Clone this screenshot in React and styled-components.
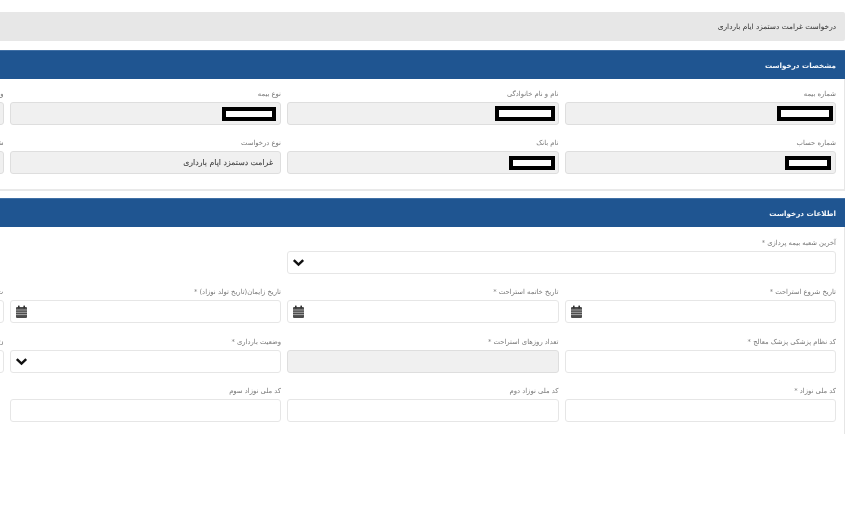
import React from "react";
import styled, { createGlobalStyle } from "styled-components";

const Global = createGlobalStyle`
  html, body { margin: 0; padding: 0; background: #fff; overflow: hidden; }
  body { font-family: "DejaVu Sans", "Noto Sans", sans-serif; }
`;

const Page = styled.div`
  width: 853px;
  height: 514px;
  overflow: hidden;
  display: flex;
  justify-content: flex-end;
  padding: 12px 8px 0 0;
  box-sizing: border-box;
  filter: blur(0.4px);
`;

const Column = styled.div`
  flex: none;
  width: 1134px;
  direction: rtl;
  display: flex;
  flex-direction: column;
`;

const TitleBar = styled.div`
  height: 29px;
  background: #e7e7e7;
  border-radius: 2px;
  display: flex;
  align-items: center;
  padding-right: 9px;
  font-size: 7.4px;
  color: #333;
  margin-bottom: 9px;
`;

const Panel = styled.section`
  border: solid #e6e6e6;
  border-width: 0 1px;
  border-bottom: ${(p) => (p.$open ? "0" : "2px solid #e9e9e9")};
  margin-bottom: 7px;
  height: ${(p) => p.$height}px;
  box-sizing: border-box;
`;

const PanelHeader = styled.h2`
  margin: 0 -1px;
  height: 29px;
  background: #1f5591;
  border-top: 1px solid #3f6fa5;
  box-sizing: border-box;
  display: flex;
  align-items: center;
  padding-right: 9px;
  font-size: 7.2px;
  font-weight: 700;
  color: #f4f7fb;
`;

const Grid = styled.div`
  display: grid;
  grid-template-columns: repeat(4, 271.5px);
  column-gap: 6px;
  row-gap: 10.33px;
  padding: ${(p) => p.$top}px 8px 0 0;
`;

const Field = styled.div`
  grid-column: span ${(p) => p.$span || 1};
  display: flex;
  flex-direction: column;
  min-width: 0;
`;

const Label = styled.label`
  height: 16px;
  line-height: 16px;
  font-size: 6.8px;
  color: #777;
  white-space: nowrap;
`;

const Control = styled.div`
  height: 23px;
  box-sizing: border-box;
  border: 1px solid ${(p) => (p.$disabled ? "#dedede" : "#e6e6e6")};
  border-radius: 3px;
  background: ${(p) => (p.$disabled ? "#f0f0f0" : "#fff")};
  display: flex;
  align-items: center;
  justify-content: ${(p) => (p.$icon ? "flex-end" : "flex-start")};
  padding: 0 ${(p) => p.$pad ?? 4}px 0 4px;
  font-size: 7.8px;
  color: #444;
  -webkit-text-stroke: 0.1px #444;
  white-space: nowrap;
`;

const Redacted = styled.span`
  display: block;
  box-sizing: border-box;
  width: ${(p) => p.$w}px;
  height: ${(p) => p.$h}px;
  background: #fff;
  border: 4px solid #000;
`;

const IconSvg = styled.svg`
  display: block;
  flex: none;
  width: 13px;
  height: 13px;
`;

function CalendarIcon() {
  return (
    <IconSvg viewBox="0 0 13 13">
      <rect x="1" y="2" width="11" height="11" rx="1" fill="#4c4c4c" />
      <rect x="3" y="0.5" width="1.6" height="3" rx="0.5" fill="#333" />
      <rect x="8.4" y="0.5" width="1.6" height="3" rx="0.5" fill="#333" />
      <path d="M1 5h11M1 7.3h11M1 9.6h11" stroke="#bdbdbd" strokeWidth="0.8" />
    </IconSvg>
  );
}

function ChevronIcon() {
  return (
    <IconSvg viewBox="0 0 13 13">
      <path d="M1.8 4.2 6.5 8.6 11.2 4.2" fill="none" stroke="#111" strokeWidth="2.5" />
    </IconSvg>
  );
}

const Star = " *";

const first = [
  ["شماره بیمه", 56, 15, 2],
  ["نام و نام خانوادگی", 60, 15, 3],
  ["نوع بیمه", 54, 14, 4],
  ["و", 0, 0, 4],
  ["شماره حساب", 46, 14, 4],
  ["نام بانک", 46, 14, 3],
  ["نوع درخواست", 0, 0, 7, "غرامت دستمزد ایام بارداری"],
  ["ش", 0, 0, 4],
];

const second = [
  { label: "تاریخ شروع استراحت" + Star, kind: "date" },
  { label: "تاریخ خاتمه استراحت" + Star, kind: "date" },
  { label: "تاریخ زایمان(تاریخ تولد نوزاد)" + Star, kind: "date" },
  { label: "ت", kind: "date" },
  { label: "کد نظام پزشکی پزشک معالج" + Star },
  { label: "تعداد روزهای استراحت" + Star, disabled: true },
  { label: "وضعیت بارداری" + Star, kind: "select" },
  { label: "ن" },
  { label: "کد ملی نوزاد" + Star },
  { label: "کد ملی نوزاد دوم" },
  { label: "کد ملی نوزاد سوم" },
];

function Icon({ kind }) {
  if (kind === "date") return <CalendarIcon />;
  if (kind === "select") return <ChevronIcon />;
  return null;
}

export default function App() {
  return (
    <Page>
      <Global />
      <Column>
        <TitleBar>درخواست غرامت دستمزد ایام بارداری</TitleBar>
        <Panel $height={141}>
          <PanelHeader>مشخصات درخواست</PanelHeader>
          <Grid $top={7}>
            {first.map(([label, w, h, pad, text]) => (
              <Field key={label}>
                <Label>{label}</Label>
                <Control $disabled $pad={pad}>
                  {text}
                  {w > 0 && <Redacted $w={w} $h={h} />}
                </Control>
              </Field>
            ))}
          </Grid>
        </Panel>
        <Panel $height={236} $open>
          <PanelHeader>اطلاعات درخواست</PanelHeader>
          <Grid $top={8}>
            <Field $span={2}>
              <Label>آخرین شعبه بیمه پردازی{Star}</Label>
              <Control $icon>
                <ChevronIcon />
              </Control>
            </Field>
            <Field $span={2} />
            {second.map((f) => (
              <Field key={f.label}>
                <Label>{f.label}</Label>
                <Control $icon={!!f.kind} $disabled={f.disabled}>
                  <Icon kind={f.kind} />
                </Control>
              </Field>
            ))}
          </Grid>
        </Panel>
      </Column>
    </Page>
  );
}
